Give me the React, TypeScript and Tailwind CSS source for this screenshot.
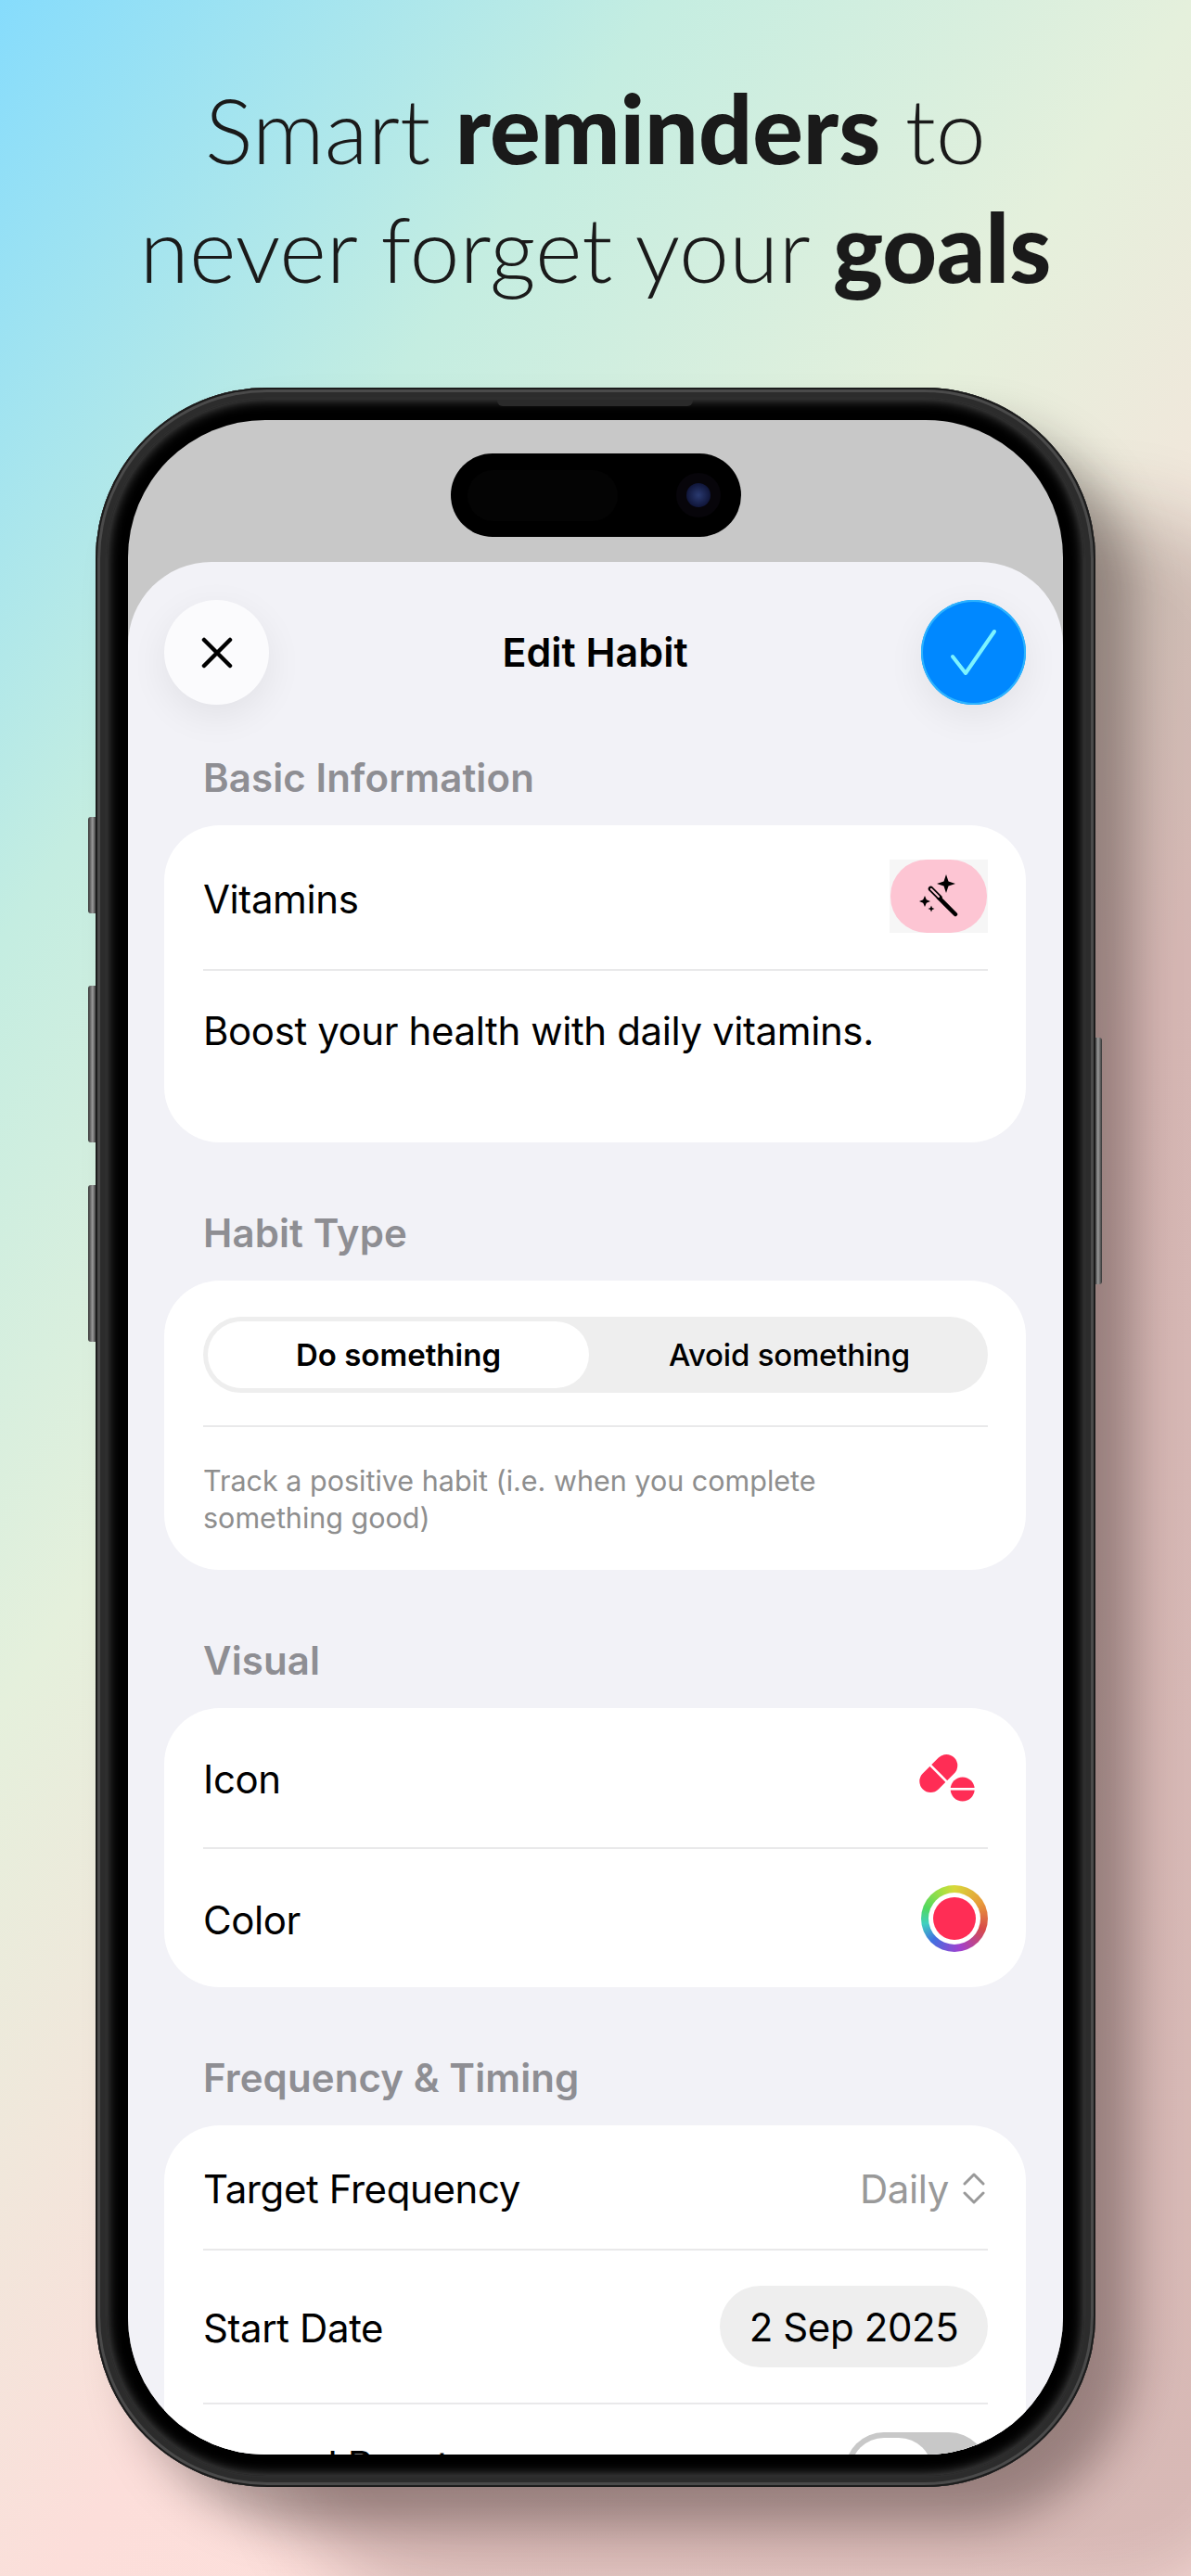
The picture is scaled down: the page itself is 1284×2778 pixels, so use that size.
import { ReactNode } from 'react'

const Section = ({ title, gap = 'mt-[74px]', children }: { title: string; gap?: string; children: ReactNode }) => (
  <section className={gap}>
    <h2 className="mb-[27px] px-[42px] text-[42px] leading-[48px] font-semibold tracking-[0.1px] text-[#8e8e93]">{title}</h2>
    <div className="rounded-[60px] bg-white pr-[41px] pl-[42px]">{children}</div>
  </section>
)

const RowLabel = ({ children }: { children: ReactNode }) => (
  <span className="mt-[3px] text-[42px] tracking-[-0.4px]">{children}</span>
)

const Divider = () => <hr className="h-[2px] border-0 bg-[#e9e9ea]" />

const WandIcon = () => (
  <svg width="106" height="79" viewBox="0 0 106 79">
    <path d="M60 16 L62.5 23.5 L70 26 L62.5 28.5 L60 36 L57.5 28.5 L50 26 L57.5 23.5 Z" fill="#000" />
    <path d="M37 39 L38.8 43.2 L43 45 L38.8 46.8 L37 51 L35.2 46.8 L31 45 L35.2 43.2 Z" fill="#000" />
    <path d="M44 49.5 L45 52 L47.5 53 L45 54 L44 56.5 L43 54 L40.500 53 L43 52 Z" fill="#000" />
    <path d="M52 41 L70 59" stroke="#000" strokeWidth="4.500" strokeLinecap="round" />
    <path d="M43.500 31.500 L53 41" stroke="#000" strokeWidth="5.500" strokeLinecap="round" />
    <path d="M43.800 31.800 L52 40" stroke="#fdc5d3" strokeWidth="2" strokeLinecap="round" />
  </svg>
)

const PillsIcon = () => (
  <svg width="60" height="51" viewBox="0 0 60 51">
    <g transform="rotate(-45 20.800 20.500)">
      <rect x="-3.200" y="8.500" width="48" height="24" rx="12" fill="#ff2d55" />
      <rect x="19.500" y="7" width="2.600" height="27" fill="#fff" />
    </g>
    <circle cx="46.700" cy="37.500" r="13" fill="#ff2d55" />
    <rect x="32" y="36" width="30" height="2.600" fill="#fff" />
  </svg>
)

const App = () => {
  return (
    <div className="relative flex h-[2778px] w-[1284px] flex-col items-center overflow-hidden bg-[linear-gradient(125deg,#86dcfc_0%,#c4ede1_22%,#e5f0dc_40%,#fcdeda_62%,#ffe2de_100%)] font-['Inter',sans-serif] text-black">
      <h1 className="h-[331px] pt-[76px] text-center font-['Lato',sans-serif] text-[97px] leading-[128px] font-light text-[#1a1a1a]">
        Smart <span className="text-[102px] leading-[100px] font-black">reminders</span> to
        <br />
        never forget your <span className="text-[102px] leading-[100px] font-black">goals</span>
      </h1>

      <div className="relative mt-[87px] h-[2264px] w-[1078px] shrink-0 rounded-[185px] bg-[#2e2e2e] p-[12px] shadow-[inset_0_0_0_2px_#1c1c1c,inset_0_0_0_5px_#4a4a4a,inset_0_0_0_10px_#2c2c2c,200px_130px_80px_rgba(60,25,25,0.2),40px_40px_50px_rgba(30,20,20,0.35)]">
        {/* side buttons */}
        <div className="absolute top-[463px] left-[-8px] h-[104px] w-[8px] rounded-l-[3px] bg-[linear-gradient(90deg,#333,#9a9a9a_60%,#444)]" />
        <div className="absolute top-[645px] left-[-8px] h-[169px] w-[8px] rounded-l-[3px] bg-[linear-gradient(90deg,#333,#9a9a9a_60%,#444)]" />
        <div className="absolute top-[860px] left-[-8px] h-[169px] w-[8px] rounded-l-[3px] bg-[linear-gradient(90deg,#333,#9a9a9a_60%,#444)]" />
        <div className="absolute top-[701px] right-[-7px] h-[266px] w-[7px] rounded-r-[3px] bg-[linear-gradient(90deg,#444,#9a9a9a_40%,#333)]" />

        <div className="relative h-full w-full rounded-[172px] bg-black p-[23px] shadow-[inset_0_0_14px_rgba(110,110,110,0.9)]">
          {/* speaker slot */}
          <div className="absolute top-[1px] left-[421px] h-[7px] w-[211px] rounded-b-[6px] bg-[#2a2a2a]" />

          <div className="h-full w-full overflow-hidden rounded-[148px] bg-[#c8c8c8]">
            <div className="flex h-[153px] justify-center pt-[36px]">
              <div className="flex h-[90px] w-[313px] items-center justify-between rounded-full bg-black pr-[22px] pl-[18px]">
                <div className="h-[55px] w-[162px] rounded-full bg-[#040404]" />
                <div className="flex h-[48px] w-[48px] items-center justify-center rounded-full bg-[#07050a]">
                  <div className="h-[26px] w-[26px] rounded-full bg-[radial-gradient(circle,#2a3a70,#10163a_70%,#07050a)]" />
                </div>
              </div>
            </div>

            <div className="h-full rounded-t-[90px] bg-[#f2f2f7] pt-[41px] pr-[40px] pl-[39px]">
              <header className="flex h-[113px] items-center justify-between">
                <button className="flex h-[113px] w-[113px] items-center justify-center rounded-full bg-[#fbfbfd] shadow-[0_12px_40px_rgba(0,0,0,0.07)]">
                  <svg width="34" height="34" viewBox="0 0 34 34" fill="none" stroke="#000" strokeWidth="4.500" strokeLinecap="round">
                    <path d="M3 3 L31 31 M31 3 L3 31" />
                  </svg>
                </button>
                <div className="text-[43px] font-semibold">Edit Habit</div>
                <button className="flex h-[113px] w-[113px] items-center justify-center rounded-full bg-[#0088ff] shadow-[inset_0_0_0_2px_#2cb4ff,0_12px_40px_rgba(0,0,0,0.07)]">
                  <svg width="56" height="52" viewBox="0 0 56 52" fill="none" stroke="#7cf3ff" strokeWidth="4" strokeLinecap="round" strokeLinejoin="round">
                    <path d="M5 30 L19 48 L50 3" />
                  </svg>
                </button>
              </header>

              <Section title="Basic Information" gap="mt-[55px]">
                <div className="flex h-[155px] items-center justify-between">
                  <RowLabel>Vitamins</RowLabel>
                  <div className="mt-[-3px] h-[79px] w-[106px] bg-[#f6f6f6]">
                    <div className="mx-auto h-[79px] w-[104px] rounded-[39px] bg-[#fdc5d3]">
                      <WandIcon />
                    </div>
                  </div>
                </div>
                <Divider />
                <div className="h-[185px] pt-[40px] text-[42px] leading-[50px] tracking-[-0.4px]">Boost your health with daily vitamins.</div>
              </Section>

              <Section title="Habit Type">
                <div className="pt-[39px] pb-[35px]">
                  <div className="flex h-[82px] rounded-full bg-[#eeeeee] p-[5px]">
                    <div className="flex h-[72px] w-[411px] items-center justify-center rounded-full bg-white pt-[2px] text-[33px] font-semibold">Do something</div>
                    <div className="flex flex-1 items-center justify-center pt-[2px] pl-[7px] text-[33px] font-medium tracking-[-0.2px]">Avoid something</div>
                  </div>
                </div>
                <Divider />
                <p className="h-[154px] pt-[38px] text-[30.5px] leading-[40px] text-[#8e8e8e]">
                  Track a positive habit (i.e. when you complete
                  <br />
                  something good)
                </p>
              </Section>

              <Section title="Visual">
                <div className="flex h-[150px] items-center justify-between">
                  <RowLabel>Icon</RowLabel>
                  <div className="mr-[14px]"><PillsIcon /></div>
                </div>
                <Divider />
                <div className="flex h-[149px] items-center justify-between">
                  <RowLabel>Color</RowLabel>
                  <div className="flex h-[72px] w-[72px] items-center justify-center rounded-full bg-[conic-gradient(#d8d83a,#e89a3a_60deg,#d84a4a_110deg,#a040d0_170deg,#4070e0_225deg,#40d0c0_260deg,#50d860_290deg,#b0e040_340deg,#d8d83a)]">
                    <div className="flex h-[56px] w-[56px] items-center justify-center rounded-full bg-white">
                      <div className="h-[46px] w-[46px] rounded-full bg-[#ff2d55]" />
                    </div>
                  </div>
                </div>
              </Section>

              <Section title="Frequency & Timing">
                <div className="flex h-[133px] items-center justify-between">
                  <RowLabel>Target Frequency</RowLabel>
                  <div className="mt-[3px] mr-[3px] flex items-center gap-[15px] text-[42px] tracking-[-0.4px] text-[#999999]">
                    Daily
                    <svg width="24" height="34" viewBox="0 0 24 34" fill="none" stroke="#999999" strokeWidth="3" strokeLinecap="round" strokeLinejoin="round">
                      <path d="M2 12 L12 2 L22 12 M2 22 L12 32 L22 22" />
                    </svg>
                  </div>
                </div>
                <Divider />
                <div className="flex h-[164px] items-center justify-between">
                  <RowLabel>Start Date</RowLabel>
                  <div className="flex h-[88px] w-[289px] items-center justify-center rounded-full bg-[#eeeeee] text-[42px] tracking-[-0.4px]">2 Sep 2025</div>
                </div>
                <Divider />
                <div className="flex items-start justify-between pt-[30px]">
                  <span className="mt-[11px] text-[42px] leading-[50px] tracking-[-0.4px]">Interval Reset</span>
                  <div className="h-[84px] w-[154px] rounded-full bg-[#c8c8c8] p-[6px]">
                    <div className="h-[72px] w-[88px] rounded-full bg-white" />
                  </div>
                </div>
              </Section>
            </div>
          </div>
        </div>
      </div>
    </div>
  )
}

export default App
